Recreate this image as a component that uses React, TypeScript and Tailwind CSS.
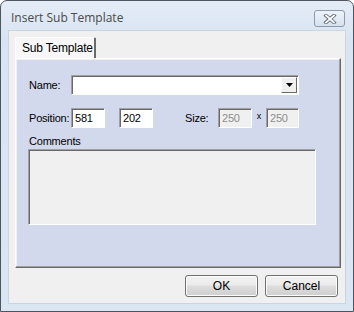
import React from "react";

const sunken =
  "border border-t-[#a0a0a0] border-l-[#a0a0a0] border-b-white border-r-white shadow-[inset_1px_1px_0_#696969]";

function Field({ value, disabled, className }: { value: string; disabled?: boolean; className: string }) {
  return (
    <div
      className={`${sunken} h-[20px] flex items-center pl-[3px] ${disabled ? "bg-[#f0f0f0] text-[#8d8d8d]" : "bg-white text-black"} ${className}`}
    >
      {value}
    </div>
  );
}

function Btn({ label }: { label: string }) {
  return (
    <div className="w-[73px] h-[22px] rounded-[3px] border border-[#707070] bg-[linear-gradient(#f2f2f2_0%,#ebebeb_45%,#dddddd_50%,#cfcfcf_100%)] shadow-[inset_0_0_0_1px_#fcfcfc] flex items-center justify-center text-black text-[12px]">
      {label}
    </div>
  );
}

export default function App() {
  return (
    <div className="w-[354px] h-[312px] border border-[#4e5560] rounded-t-[7px] bg-[linear-gradient(#e4ecf6,#d8e4f2_40px,#dbe6f3)] flex flex-col px-[7px] pb-[7px] [font-family:'Liberation_Sans',Arial,sans-serif] text-[11px] text-black">
      <div className="h-[29px] flex items-start justify-between pl-[3px]">
        <span className="text-[12px] leading-[16px] text-[#4a4a4a] mt-[9px] [font-family:'Open_Sans','Noto_Sans',sans-serif]">
          Insert Sub Template
        </span>
        <div className="w-[31px] h-[17px] mt-[9px] mr-[1px] rounded-[3px] border border-[#8c9aab] bg-[linear-gradient(#eef3f9,#d6e1ee)] flex items-center justify-center">
          <svg width="14" height="10" viewBox="0 0 14 10">
            <path d="M3 1.5 L11 8.5 M11 1.5 L3 8.5" stroke="#5d6978" strokeWidth="3.6" strokeLinecap="square" />
            <path d="M3 1.5 L11 8.5 M11 1.5 L3 8.5" stroke="#ffffff" strokeWidth="1.8" strokeLinecap="square" />
          </svg>
        </div>
      </div>
      <div className="flex-1 bg-[#f0f0f0] border border-[#c9d5e3] flex flex-col pl-[6px] pr-[4px] pt-[6px]">
        <div className="flex">
          <div className="w-[81px] h-[21px] bg-[#f7f7f7] border-t border-l border-white border-r-2 border-r-[#696969] rounded-t-[2px] flex items-center pl-[6px] text-[12px] whitespace-nowrap tracking-[-0.2px]">
            Sub Template
          </div>
        </div>
        <div className="h-[210px] border-t border-l border-white border-r border-b border-r-[#696969] border-b-[#696969] shadow-[inset_-1px_-1px_0_#a0a0a0]">
          <div className="h-[206px] ml-[1px] mt-[1px] mr-[1px] bg-[#d3d9ec] flex flex-col pl-[12px] pt-[15px] tracking-[-0.2px]">
            <div className="flex items-center h-[20px]">
              <span className="w-[42px]">Name:</span>
              <div className={`${sunken} bg-white w-[228px] h-[20px] flex justify-end items-center pr-[1px]`}>
                <div className="w-[16px] h-[16px] bg-[#f0f0f0] border border-t-white border-l-white border-b-[#696969] border-r-[#696969] flex items-center justify-center">
                  <svg width="7" height="4" viewBox="0 0 7 4">
                    <path d="M0 0 H7 L3.5 4 Z" fill="#000" />
                  </svg>
                </div>
              </div>
            </div>
            <div className="flex items-center h-[20px] mt-[13px]">
              <span className="w-[42px] whitespace-nowrap">Position:</span>
              <Field value="581" className="w-[34px]" />
              <Field value="202" className="w-[34px] ml-[14px]" />
              <span className="ml-[32px] w-[33px]">Size:</span>
              <Field value="250" disabled className="w-[34px]" />
              <span className="w-[14px] text-center text-[9px] mt-[-3px]">x</span>
              <Field value="250" disabled className="w-[33px]" />
            </div>
            <div className="mt-[6px] h-[15px] flex items-center">Comments</div>
            <div className={`${sunken} bg-[#f0f0f0] w-[288px] h-[76px] -ml-[1px]`} />
          </div>
        </div>
        <div className="flex justify-end gap-[7px] mt-[7px] mr-[3px]">
          <Btn label="OK" />
          <Btn label="Cancel" />
        </div>
      </div>
    </div>
  );
}
